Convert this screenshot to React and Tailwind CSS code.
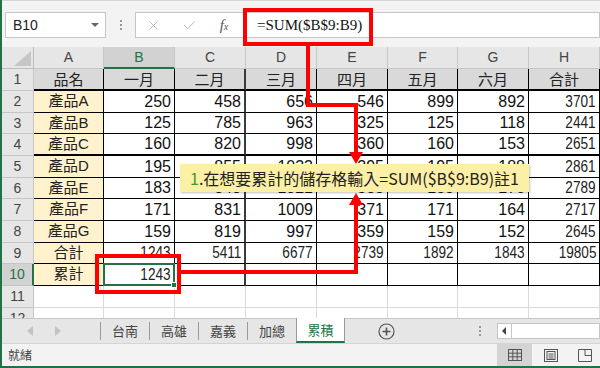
import React from 'react';
import { X, Check } from 'lucide-react';

const sans = "font-['Liberation_Sans','Noto_Sans_CJK_TC',sans-serif]";
const cjk = "font-['Noto_Sans_CJK_TC','Noto_Sans',sans-serif]";

const colW = ['w-[70px]', 'w-[71px]', 'w-[71px]', 'w-[71px]', 'w-[71px]', 'w-[70px]', 'w-[71px]', 'w-[71px]'];
const letters = ['A', 'B', 'C', 'D', 'E', 'F', 'G', 'H'];
// heights for rows 1..12
const rowH = ['h-[22px]', 'h-[22px]', 'h-[21px]', 'h-[22px]', 'h-[22px]', 'h-[21px]', 'h-[22px]', 'h-[22px]', 'h-[21px]', 'h-[22px]', 'h-[22px]', 'h-[22px]'];

const data = [
  ['品名', '一月', '二月', '三月', '四月', '五月', '六月', '合計'],
  ['產品A', 250, 458, 656, 546, 899, 892, 3701],
  ['產品B', 125, 785, 963, 325, 125, 118, 2441],
  ['產品C', 160, 820, 998, 360, 160, 153, 2651],
  ['產品D', 195, 855, 1033, 395, 195, 188, 2861],
  ['產品E', 183, 843, 1021, 383, 183, 176, 2789],
  ['產品F', 171, 831, 1009, 371, 171, 164, 2717],
  ['產品G', 159, 819, 997, 359, 159, 152, 2645],
  ['合計', 1243, 5411, 6677, 2739, 1892, 1843, 19805],
  ['累計', 1243, '', '', '', '', '', ''],
];

function Cell({ r, c, value }) {
  const inTable = r < 10;
  let cls = `${colW[c]} shrink-0 flex items-center border-b border-r `;
  if (!inTable) {
    cls += 'border-[#dadada]';
    return <div className={cls} />;
  }
  cls += 'border-black ';
  if (c === 2) cls += 'border-r-2 border-r-[#3a3a3a] ';
  if (r === 0 || r === 3) cls += 'border-b-2 ';
  if (r === 0) {
    cls += `bg-[#d9d9d9] justify-center text-[15px] text-[#222] ${cjk}`;
  } else if (c === 0) {
    cls += `bg-[#fff2cc] justify-center text-[15px] text-[#222] ${sans}`;
  } else {
    cls += `justify-end pr-[3px] text-[#111] ${sans} text-[16px]`;
  }
  // totals column, totals row and the running total use a narrower face
  const thin = r > 0 && c > 0 && (c === 7 || r >= 8);
  const content = thin ? (
    <span className="inline-block scale-x-[0.85] origin-right text-[#222]">{value}</span>
  ) : (
    value
  );
  if (r === 9 && c === 1) {
    return (
      <div className={`${cls} relative`}>
        <div className="absolute -left-px -top-px right-[-1px] bottom-[-1px] border-2 border-[#217346]" />
        <div className="absolute right-[-3px] bottom-[-3px] w-[6px] h-[6px] bg-[#217346] border border-white" />
        <span className="relative">{content}</span>
      </div>
    );
  }
  return <div className={cls}>{content}</div>;
}

function Sheet() {
  return (
    <div className="h-[271px] overflow-hidden">
      <div className="flex h-[22px]">
        <div className="w-[32px] shrink-0 relative bg-[#e6e6e6] border-r border-b border-[#bdbdbd]">
          <div className="absolute right-[2px] bottom-[2px] w-0 h-0 border-l-[17px] border-l-transparent border-b-[15px] border-b-[#c6c6c6]" />
        </div>
        {letters.map((l, i) => (
          <div
            key={l}
            className={`${colW[i]} shrink-0 flex items-center justify-center text-[14px] ${sans} ${
              i === 1
                ? 'bg-[#d2d2d2] text-[#217346] border-b-2 border-b-[#217346] border-r border-r-[#c6c6c6]'
                : 'bg-[#e6e6e6] text-[#444] border-b border-r border-[#c6c6c6]'
            }`}
          >
            {l}
          </div>
        ))}
      </div>
      {rowH.map((h, r) => (
        <div key={r} className={`flex ${h}`}>
          <div
            className={`w-[32px] shrink-0 flex items-center justify-center text-[14px] ${sans} ${
              r === 9
                ? 'bg-[#d2d2d2] text-[#217346] border-r-2 border-r-[#217346] border-b border-b-[#c6c6c6]'
                : 'bg-[#e6e6e6] text-[#444] border-r border-b border-[#c6c6c6]'
            }`}
          >
            {r + 1}
          </div>
          {letters.map((l, c) => (
            <Cell key={l} r={r} c={c} value={r < 10 ? data[r][c] : ''} />
          ))}
        </div>
      ))}
    </div>
  );
}

function FormulaBar() {
  return (
    <div className="h-[47px] bg-[#f3f3f3] border-t border-[#d5d5d5] flex items-start pt-[11px]">
      <div className={`ml-[3px] w-[101px] h-[26px] bg-white border border-[#c6c6c6] flex items-center justify-between pl-[7px] pr-[6px] text-[14px] text-[#222] ${sans}`}>
        <span>B10</span>
        <span className="w-0 h-0 border-l-[4px] border-r-[4px] border-t-[4px] border-l-transparent border-r-transparent border-t-[#666]" />
      </div>
      <div className="w-[29px] h-[26px] flex flex-col items-center justify-center gap-[2px]">
        <span className="w-[2px] h-[2px] bg-[#999]" />
        <span className="w-[2px] h-[2px] bg-[#999]" />
        <span className="w-[2px] h-[2px] bg-[#999]" />
      </div>
      <div className="flex-1 h-[26px] bg-white border border-[#c6c6c6] flex items-center">
        <div className="w-[35px] flex justify-center">
          <X size={15} strokeWidth={1.5} color="#b8b8b8" />
        </div>
        <div className="w-[36px] flex justify-center">
          <Check size={15} strokeWidth={1.5} color="#b8b8b8" />
        </div>
        <div className="w-[34px] flex justify-center text-[#555] font-['Liberation_Serif',serif] italic text-[15px] leading-none">
          f<span className="text-[10px] mt-[4px]">x</span>
        </div>
        <div className="pl-[16px] text-[15px] text-[#111] font-['Liberation_Serif',serif]">=SUM($B$9:B9)</div>
      </div>
    </div>
  );
}

function TabBar() {
  const tabs = ['台南', '高雄', '嘉義', '加總'];
  return (
    <div className="h-[25px] bg-[#e6e6e6] border-t border-[#c6c6c6] flex items-stretch">
      <div className="w-[98px] flex items-center">
        <svg width="8" height="10" className="ml-[24px]"><polygon points="7,0 7,10 1,5" fill="#c3c3c3" /></svg>
        <svg width="8" height="10" className="ml-[20px]"><polygon points="1,0 1,10 7,5" fill="#c3c3c3" /></svg>
      </div>
      {tabs.map((t) => (
        <div key={t} className={`w-[49px] flex items-center justify-center border-l border-[#9a9a9a] my-[3px] text-[13px] text-[#444] ${cjk}`}>
          {t}
        </div>
      ))}
      <div className={`w-[49px] -mt-px bg-white border-l border-r border-[#9a9a9a] border-b-2 border-b-[#217346] flex items-center justify-center text-[13px] text-[#217346] ${cjk}`}>
        累積
      </div>
      <div className="w-[82px] flex items-center justify-center">
        <svg width="17" height="17" viewBox="0 0 17 17">
          <circle cx="8.5" cy="8.5" r="7.5" fill="none" stroke="#555" strokeWidth="1.2" />
          <path d="M8.5 4.5v8M4.5 8.5h8" stroke="#555" strokeWidth="1.6" />
        </svg>
      </div>
      <div className="flex-1 flex items-center justify-end">
        <div className="flex flex-col gap-[2px] mr-[16px]">
          <span className="w-[2px] h-[2px] bg-[#999]" />
          <span className="w-[2px] h-[2px] bg-[#999]" />
          <span className="w-[2px] h-[2px] bg-[#999]" />
        </div>
      </div>
      <div className="w-[103px] flex items-center">
        <div className="w-full h-[16px] bg-white border border-[#c6c6c6] flex">
          <div className="w-[14px] border-r border-[#c6c6c6] flex items-center justify-center">
            <svg width="5" height="8"><polygon points="4,0 4,8 0,4" fill="#444" /></svg>
          </div>
        </div>
      </div>
    </div>
  );
}

function StatusBar() {
  return (
    <div className="h-[23px] bg-[#f3f3f3] border-t border-[#d4d4d4] flex items-stretch">
      <div className={`flex-1 flex items-center pl-[6px] text-[12px] text-[#444] ${cjk}`}>就緒</div>
      <div className="w-[35px] bg-[#d4d4d4] flex items-center justify-center">
        <svg width="14" height="12" viewBox="0 0 14 12">
          <rect x="0.5" y="0.5" width="13" height="11" fill="none" stroke="#555" />
          <path d="M0.5 4.2h13M0.5 7.8h13M4.8 0.5v11M9.2 0.5v11" stroke="#555" />
        </svg>
      </div>
      <div className="w-[38px] flex items-center justify-center">
        <svg width="14" height="13" viewBox="0 0 14 13">
          <rect x="0.5" y="0.5" width="13" height="12" fill="none" stroke="#555" />
          <rect x="3" y="2.5" width="8" height="8" fill="none" stroke="#555" />
          <path d="M4.5 5h5M4.5 7h5M4.5 9h5" stroke="#555" />
        </svg>
      </div>
      <div className="w-[30px] flex items-center justify-center">
        <svg width="14" height="13" viewBox="0 0 14 13">
          <path d="M0.5 0.5h13v12h-13z" fill="none" stroke="#555" />
          <path d="M7 0.5v6h6.5" fill="none" stroke="#555" />
        </svg>
      </div>
    </div>
  );
}

export default function App() {
  return (
    <div className="relative w-[600px] h-[368px] overflow-hidden bg-white">
      <div className="w-full h-full flex flex-col border-l-2 border-b-2 border-[#217346]">
        <FormulaBar />
        <Sheet />
        <TabBar />
        <StatusBar />
      </div>

      {/* callout note */}
      <div className={`absolute left-[180px] top-[164px] w-[349px] h-[28px] bg-[#fcefa6] shadow-[1px_1px_2px_rgba(0,0,0,0.25)] flex items-center pl-[10px] text-[16px] text-[#222] ${cjk}`}>
        <span className="whitespace-nowrap">
          <span className="text-[#3c9a2c]">1</span>.在想要累計的儲存格輸入=SUM($B$9:B9)註1
        </span>
      </div>

      {/* red annotations */}
      <div className="absolute left-[243px] top-[8px] w-[130px] h-[38px] border-4 border-[#ff0000]" />
      <div className="absolute left-[95px] top-[254px] w-[86px] h-[40px] border-4 border-[#ff0000]" />
      <svg className="absolute inset-0 pointer-events-none" width="600" height="368">
        <polyline points="308,45 308,105 356,105 356,153" fill="none" stroke="#ff0000" strokeWidth="4" />
        <polygon points="349,152 363,152 356,164" fill="#ff0000" />
        <polyline points="180,272 356,272 356,204" fill="none" stroke="#ff0000" strokeWidth="4" />
        <polygon points="349,205 363,205 356,193" fill="#ff0000" />
      </svg>
    </div>
  );
}
